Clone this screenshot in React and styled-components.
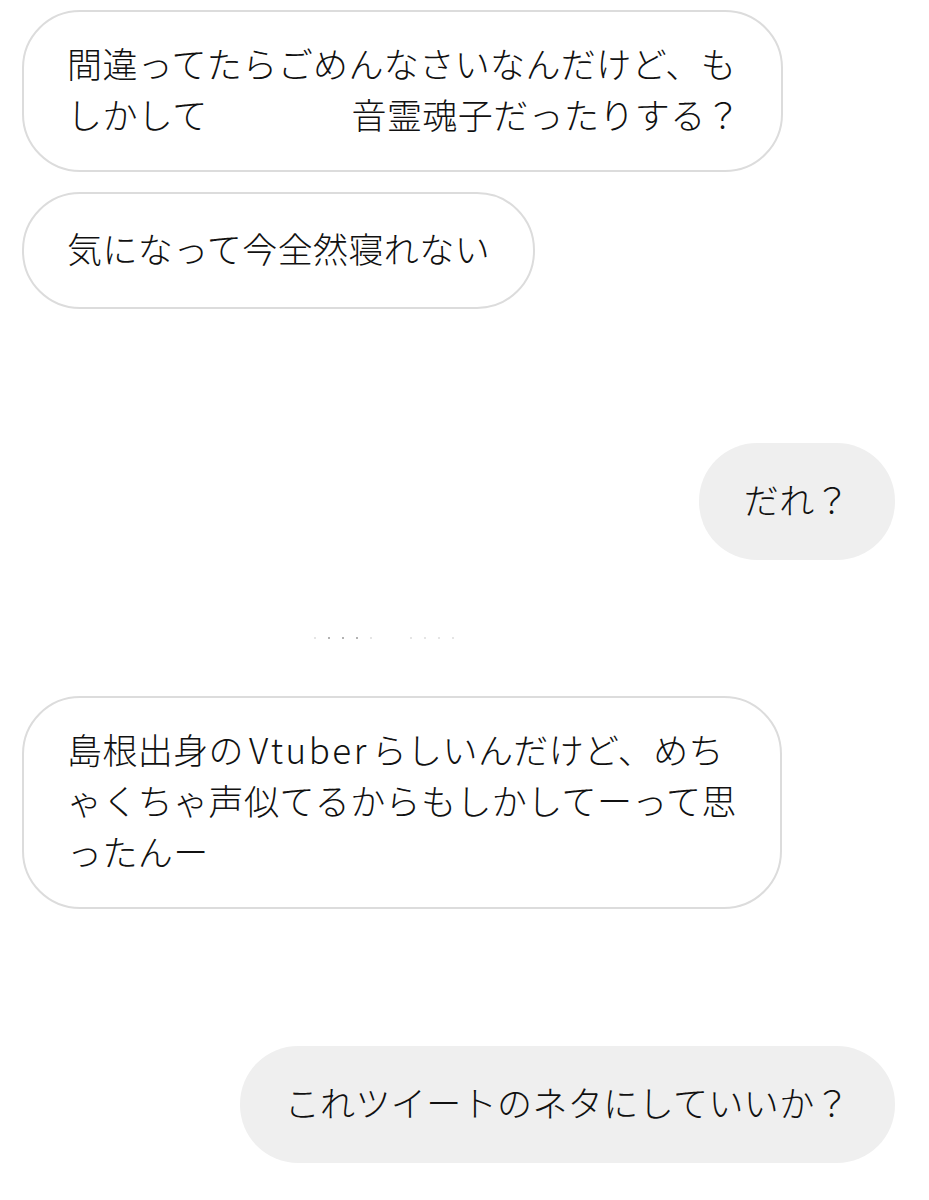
import React from "react";
import styled, { createGlobalStyle } from "styled-components";

const GlobalStyle = createGlobalStyle`
  html, body {
    margin: 0;
    padding: 0;
    background: #ffffff;
  }
  body {
    font-family: "Noto Sans CJK JP", "Noto Sans", sans-serif;
    color: #111111;
  }
`;

const Thread = styled.div`
  display: flex;
  flex-direction: column;
  padding: 10px 34px 40px 22px;
  min-height: 1200px;
  box-sizing: border-box;
`;

const Row = styled.div`
  display: flex;
  justify-content: ${(p) => (p.$mine ? "flex-end" : "flex-start")};
  margin-top: ${(p) => p.$top || 0}px;
`;

const Bubble = styled.div`
  box-sizing: border-box;
  display: flex;
  flex-direction: column;
  justify-content: center;
  min-height: 117px;
  max-width: 761px;
  border-radius: 58px;
  font-size: 35px;
  font-weight: 300;
  line-height: 51px;
  letter-spacing: 0.4px;
  color: #111111;
  background: ${(p) => (p.$mine ? "#efefef" : "#ffffff")};
  border: ${(p) => (p.$mine ? "none" : "2px solid #dcdcdc")};
  padding: ${(p) => (p.$mine ? "26px 45px 32px" : "25px 43px 31px")};
  white-space: nowrap;
`;

const Redacted = styled.span`
  display: inline-block;
  width: 144px;
`;

const Latin = styled.span`
  letter-spacing: 2.5px;
  margin: 0 3px 0 5px;
`;

const Separator = styled.div`
  display: flex;
  justify-content: center;
  gap: 38px;
  height: 3px;
  margin-top: 76px;
  padding-right: 150px;
`;

const DotGroup = styled.div`
  display: flex;
  align-items: center;
  gap: 12px;
`;

const Dot = styled.span`
  width: 2px;
  height: 2px;
  border-radius: 1px;
  background: ${(p) => (p.$strong ? "#9a9a9a" : "#dcdcdc")};
`;

export default function App() {
  return (
    <>
      <GlobalStyle />
      <Thread>
        <Row>
          <Bubble>
            <div>間違ってたらごめんなさいなんだけど、も</div>
            <div>
              しかして<Redacted aria-hidden="true" />音霊魂子だったりする？
            </div>
          </Bubble>
        </Row>
        <Row $top={20}>
          <Bubble>
            <div>気になって今全然寝れない</div>
          </Bubble>
        </Row>

        <Row $mine $top={134}>
          <Bubble $mine>
            <div>だれ？</div>
          </Bubble>
        </Row>

        <Separator>
          <DotGroup>
            <Dot />
            <Dot $strong />
            <Dot $strong />
            <Dot $strong />
            <Dot />
          </DotGroup>
          <DotGroup>
            <Dot />
            <Dot />
            <Dot />
            <Dot />
          </DotGroup>
        </Separator>

        <Row $top={57}>
          <Bubble>
            <div>
              島根出身の<Latin>Vtuber</Latin>らしいんだけど、めち
            </div>
            <div>ゃくちゃ声似てるからもしかしてーって思</div>
            <div>ったんー</div>
          </Bubble>
        </Row>

        <Row $mine $top={137}>
          <Bubble $mine>
            <div>これツイートのネタにしていいか？</div>
          </Bubble>
        </Row>
      </Thread>
    </>
  );
}
